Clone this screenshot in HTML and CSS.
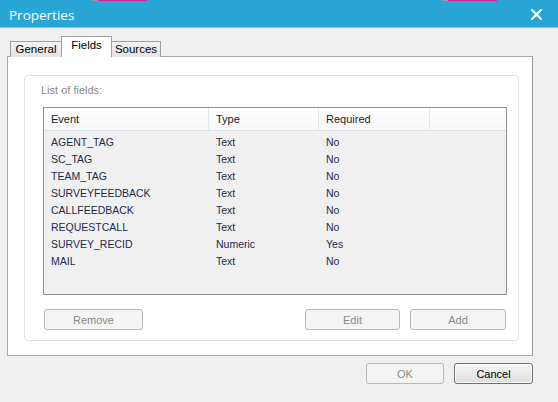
FILE: index.html
```html
<!DOCTYPE html>
<html>
<head>
<meta charset="utf-8">
<link rel="stylesheet" href="styles.css">
</head>
<body>
<div class="strip">
  <span class="s-gap1"></span><span class="s-grey"></span><span class="s-pink1"></span>
  <span class="s-gap2"></span><span class="s-grey"></span><span class="s-pink2"></span>
</div>
<div class="titlebar">
  <span class="title">Properties</span>
  <svg class="close" width="11" height="11" viewBox="0 0 11 11"><path d="M1 1L10 10M10 1L1 10" stroke="#fff" stroke-width="2.2" stroke-linecap="square"/></svg>
</div>
<div class="dialog">
  <div class="tabs">
    <div class="tab t1">General</div>
    <div class="tab active">Fields</div>
    <div class="tab t3">Sources</div>
  </div>
  <div class="panel">
    <div class="group">
      <div class="grouplabel">List of fields:</div>
      <div class="list">
        <div class="row head">
          <div class="c c1">Event</div><div class="c c2">Type</div><div class="c c3">Required</div><div class="c c4"></div>
        </div>
        <div class="body">
          <div class="row"><div class="c c1">AGENT_TAG</div><div class="c c2">Text</div><div class="c c3">No</div></div>
          <div class="row"><div class="c c1">SC_TAG</div><div class="c c2">Text</div><div class="c c3">No</div></div>
          <div class="row"><div class="c c1">TEAM_TAG</div><div class="c c2">Text</div><div class="c c3">No</div></div>
          <div class="row"><div class="c c1">SURVEYFEEDBACK</div><div class="c c2">Text</div><div class="c c3">No</div></div>
          <div class="row"><div class="c c1">CALLFEEDBACK</div><div class="c c2">Text</div><div class="c c3">No</div></div>
          <div class="row"><div class="c c1">REQUESTCALL</div><div class="c c2">Text</div><div class="c c3">No</div></div>
          <div class="row"><div class="c c1">SURVEY_RECID</div><div class="c c2">Numeric</div><div class="c c3">Yes</div></div>
          <div class="row"><div class="c c1">MAIL</div><div class="c c2">Text</div><div class="c c3">No</div></div>
        </div>
      </div>
      <div class="btnrow">
        <button class="btn dis w-remove">Remove</button>
        <span class="spacer"></span>
        <button class="btn dis w-edit">Edit</button>
        <button class="btn dis w-add">Add</button>
      </div>
    </div>
  </div>
  <div class="footer">
    <button class="btn dis w-ok">OK</button>
    <button class="btn def w-cancel">Cancel</button>
  </div>
</div>
</body>
</html>
```
FILE: styles.css
```css
*, *::before, *::after { box-sizing: border-box; }
html, body { margin: 0; padding: 0; }
body {
  width: 558px; height: 402px; overflow: hidden;
  background: #f0f0f0;
  font-family: "Liberation Sans", sans-serif;
  font-size: 11px;
}
.strip { height: 1px; display: flex; background: #29a6d6; }
.strip span { display: block; height: 1px; }
.s-gap1 { width: 92px; }
.s-gap2 { width: 295px; }
.s-grey { width: 6px; background: #9a9a9a; }
.s-pink1 { width: 49px; background: #d0288f; }
.s-pink2 { width: 49px; background: #d0288f; }
.titlebar {
  height: 27px; background: #29a6d6;
  border-bottom: 1px solid #7fcbea;
  display: flex; align-items: center; justify-content: space-between;
  padding: 2px 16px 0 9px;
}
.title { color: #fff; font-family: "Open Sans", "Noto Sans", sans-serif; font-size: 13.5px; }
.close { display: block; margin-top: -2px; }
.dialog { padding: 9px 0 0 7px; }
.tabs { display: flex; align-items: flex-end; height: 20px; padding-left: 3px; position: relative; z-index: 1; }
.tab {
  height: 16px; line-height: 15px; text-align: center;
  border: 1px solid #a0a0a0; border-bottom: none;
  background: linear-gradient(#f3f3f3, #e3e3e3);
  color: #000;
  font-size: 11.5px;
}
.t1 { width: 52px; }
.t3 { width: 50px; }
.tab.active { width: 51px; height: 21px; line-height: 17px; background: #fff; margin: 0 -1px 0 -1px; position: relative; z-index: 2; }
.panel {
  width: 526px; height: 300px;
  margin-top: -1px;
  background: #fff; border: 1px solid #a8a8a8; border-right-color: #999;
  padding: 18px 13px 14px 16px;
}
.group {
  height: 266px; border: 1px solid #dde3ea; border-radius: 4px;
  padding: 0 12px 0 18px; display: flex; flex-direction: column;
}
.grouplabel { color: #8b8b8b; font-size: 11px; height: 31px; line-height: 28px; margin-left: -2px; }
.list {
  width: 464px; height: 188px; flex: none;
  border: 1px solid #8e8e8e; background: #f0f0f0;
  font-size: 10.5px; color: #1c2a4c;
}
.row { display: flex; height: 17px; line-height: 17px; }
.head { height: 23px; line-height: 23px; background: linear-gradient(#ffffff, #f6f7f8); border-bottom: 1px solid #dde0e4; color: #1c1c1c; font-size: 11px; }
.head .c { border-right: 1px solid #e4e6e9; }
.c { padding-left: 7px; white-space: nowrap; }
.c1 { width: 165px; }
.c2 { width: 110px; }
.c3 { width: 111px; }
.c4 { flex: 1; border-right: none !important; }
.body { padding-top: 3px; }
.btnrow { display: flex; gap: 10px; margin-top: 14px; padding-left: 1px; }
.spacer { flex: 1; }
.btn {
  height: 21px; border-radius: 3px;
  font-family: "Liberation Sans", sans-serif; font-size: 11px;
  padding: 0; margin: 0;
}
.dis { background: #f4f4f4; border: 1px solid #b8b8b8; color: #8a8a8a; }
.def { background: linear-gradient(#f6f6f6, #dddddd); border: 1px solid #707070; color: #000; box-shadow: inset 0 0 0 1px #fcfcfc; }
.w-remove { width: 99px; }
.w-edit { width: 95px; }
.w-add { width: 96px; }
.w-ok { width: 78px; }
.w-cancel { width: 79px; }
.footer { display: flex; justify-content: flex-end; gap: 10px; padding-right: 25px; margin-top: 7px; }
```
